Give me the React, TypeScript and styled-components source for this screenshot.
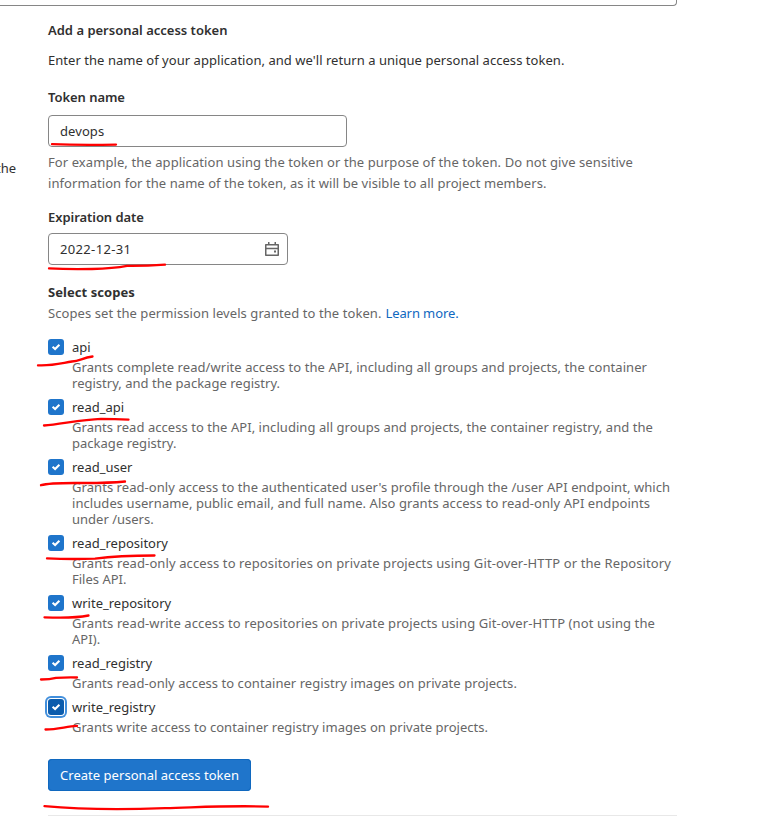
import React from 'react';
import styled, { createGlobalStyle, css } from 'styled-components';

const GlobalStyle = createGlobalStyle`
  *, *::before, *::after { box-sizing: border-box; }
  body {
    margin: 0;
    background: #fff;
    color: #303030;
    font: 400 13px/20px "Noto Sans", "Open Sans", sans-serif;
  }
`;

const Page = styled.div`
  position: relative;
  display: flex;
  width: 779px;
  height: 831px;
  overflow: hidden;
`;

const Sidebar = styled.aside`
  display: flex;
  justify-content: flex-end;
  align-items: flex-start;
  width: 48px;
  flex: none;
  padding: 158px 32px 0 0;
  white-space: nowrap;
`;

const Main = styled.main`
  width: 629px;
  flex: none;
  display: flex;
  flex-direction: column;
  align-items: flex-start;
`;

const PanelEdge = styled.div`
  align-self: stretch;
  height: 6px;
  margin-left: -60px;
  border: 1px solid #868686;
  border-top: 0;
  border-radius: 0 0 4px 4px;
`;

const Title = styled.h5`
  margin: 14px 0 10px;
  font-size: 13px;
  line-height: 20px;
  font-weight: 600;
`;

const Line = styled.span<{ $spacing?: number }>`
  display: block;
  white-space: nowrap;
  letter-spacing: ${(p) => p.$spacing ?? 0}px;
`;

const Intro = styled.p`
  margin: 0 0 17px;
`;

const Label = styled.label<{ $gap: number }>`
  margin-bottom: ${(p) => p.$gap}px;
  font-weight: 600;
  letter-spacing: -0.05px;
`;

const Field = styled.div<{ $width: number; $spacing?: number }>`
  display: flex;
  align-items: center;
  justify-content: space-between;
  width: ${(p) => p.$width}px;
  height: 32px;
  padding: 0 7px 0 11px;
  border: 1px solid #868686;
  border-radius: 4px;
  letter-spacing: ${(p) => p.$spacing ?? 0}px;
`;

const Help = styled.div`
  margin: 5px 0 13px;
  color: #666;
  line-height: 21px;
`;

const ScopesTitle = styled.b`
  margin-top: 17px;
  font-weight: 700;
  letter-spacing: 0.06px;
`;

const ScopesHelp = styled.div`
  display: flex;
  gap: 4px;
  margin: 1px 0 14px;
  color: #666;
`;

const Link = styled.a`
  color: #1068bf;
  letter-spacing: -0.1px;
`;

const ScopeList = styled.div`
  display: flex;
  flex-direction: column;
  gap: 6px;
`;

const Scope = styled.div`
  display: grid;
  grid-template-columns: 16px auto;
  column-gap: 8px;
  row-gap: 2px;
  align-items: center;
`;

const Checkbox = styled.span<{ $focused?: boolean }>`
  display: flex;
  width: 16px;
  height: 16px;
  border-radius: 3px;
  background: #1f75cb;
  ${(p) =>
    p.$focused &&
    css`
      background: #0b5cad;
      box-shadow: 0 0 0 1px #fff, 0 0 0 3px #428fdc;
    `}
`;

const Description = styled.div`
  grid-column: 2;
  color: #666;
  line-height: 16px;
`;

const Submit = styled.button`
  height: 32px;
  width: 203px;
  margin-top: 24px;
  padding: 0;
  border: 0;
  border-radius: 4px;
  background: #1f75cb;
  box-shadow: inset 0 0 0 1px #1068bf;
  color: #fff;
  font: inherit;
  letter-spacing: 0.036px;
  white-space: nowrap;
`;

const Divider = styled.div`
  align-self: stretch;
  height: 1px;
  margin-top: 24px;
  background: #e8e8e8;
`;

const Marks = styled.svg`
  position: absolute;
  inset: 0;
  pointer-events: none;
`;

type TextLine = [text: string, spacing: number];

const scopes: { name: string; focused?: boolean; lines: TextLine[] }[] = [
  {
    name: 'api',
    lines: [
      ['Grants complete read/write access to the API, including all groups and projects, the container', 0.064],
      ['registry, and the package registry.', 0.02],
    ],
  },
  {
    name: 'read_api',
    lines: [
      ['Grants read access to the API, including all groups and projects, the container registry, and the', 0.05],
      ['package registry.', 0.02],
    ],
  },
  {
    name: 'read_user',
    lines: [
      ["Grants read-only access to the authenticated user's profile through the /user API endpoint, which", 0.059],
      ['includes username, public email, and full name. Also grants access to read-only API endpoints', 0.068],
      ['under /users.', 0],
    ],
  },
  {
    name: 'read_repository',
    lines: [
      ['Grants read-only access to repositories on private projects using Git-over-HTTP or the Repository', 0.106],
      ['Files API.', 0],
    ],
  },
  {
    name: 'write_repository',
    lines: [
      ['Grants read-write access to repositories on private projects using Git-over-HTTP (not using the', 0.102],
      ['API).', 0.05],
    ],
  },
  {
    name: 'read_registry',
    lines: [['Grants read-only access to container registry images on private projects.', 0.05]],
  },
  {
    name: 'write_registry',
    focused: true,
    lines: [['Grants write access to container registry images on private projects.', 0.023]],
  },
];

const strokes = [
  'M52 144.2 Q80 145.3 116 144.6',
  'M49 268.4 Q68 269.5 92 269 C108 268.5 118 267.5 127 265.8 Q145 266 165 264.6',
  'M38 365.3 C52 366 60 363.5 72 361.5 C80 361 82 358 92.5 356.5',
  'M44 425.5 C60 424.5 80 419.5 101 418.8 Q115 419 128.5 419.6',
  'M41 485.2 C50 482.5 65 483 85 483 Q110 483 125 481.5',
  'M47 558.3 Q70 559.5 95 558.6 C115 556 130 555.5 154.5 555.5',
  'M44.5 617.3 C60 618 76 618 88.5 615.5',
  'M41 679.5 Q50 679.3 56 677.8 Q66 677.3 77 677.5',
  'M45.5 729.5 C58 729.3 66 726.5 77 725.8',
  'M44.5 806.2 C75 809 120 809.8 165 808.2 C205 807 230 805.3 268 806.6',
];

const Check = () => (
  <svg width="16" height="16" viewBox="0 0 16 16" fill="none" stroke="#fff" strokeWidth="2.1">
    <path d="M4.6 7.8 7.1 10.1 11.4 5.8" />
  </svg>
);

const CalendarIcon = () => (
  <svg width="16" height="16" viewBox="0 0 16 16" fill="none" stroke="#666" strokeWidth="1.5">
    <path d="M1.75 3.75h12.5v10.5H1.75z" strokeLinejoin="round" />
    <path d="M1.5 7.5h13M4.75 1v3M11.25 1v3" />
    <path d="M10 10.5h2" strokeWidth="2" />
  </svg>
);

export default function App() {
  return (
    <Page>
      <GlobalStyle />
      <Sidebar>the</Sidebar>
      <Main>
        <PanelEdge />
        <Title>Add a personal access token</Title>
        <Intro>
          <Line $spacing={0.04}>
            Enter the name of your application, and we'll return a unique personal access token.
          </Line>
        </Intro>
        <Label $gap={8}>Token name</Label>
        <Field $width={299} $spacing={0.08}>devops</Field>
        <Help>
          <Line $spacing={0.084}>
            For example, the application using the token or the purpose of the token. Do not give sensitive
          </Line>
          <Line $spacing={0.064}>
            information for the name of the token, as it will be visible to all project members.
          </Line>
        </Help>
        <Label $gap={6}>Expiration date</Label>
        <Field $width={240} $spacing={0.34}>
          2022-12-31
          <CalendarIcon />
        </Field>
        <ScopesTitle>Select scopes</ScopesTitle>
        <ScopesHelp>
          <Line $spacing={0.075}>Scopes set the permission levels granted to the token.</Line>
          <Link>Learn more.</Link>
        </ScopesHelp>
        <ScopeList>
          {scopes.map((scope) => (
            <Scope key={scope.name}>
              <Checkbox $focused={scope.focused}>
                <Check />
              </Checkbox>
              <span>{scope.name}</span>
              <Description>
                {scope.lines.map(([text, spacing]) => (
                  <Line key={text} $spacing={spacing}>{text}</Line>
                ))}
              </Description>
            </Scope>
          ))}
        </ScopeList>
        <Submit>Create personal access token</Submit>
        <Divider />
      </Main>
      <Marks width="779" height="831" fill="none" stroke="#f00" strokeWidth="2.3" strokeLinecap="round">
        {strokes.map((d) => (
          <path key={d} d={d} />
        ))}
      </Marks>
    </Page>
  );
}
